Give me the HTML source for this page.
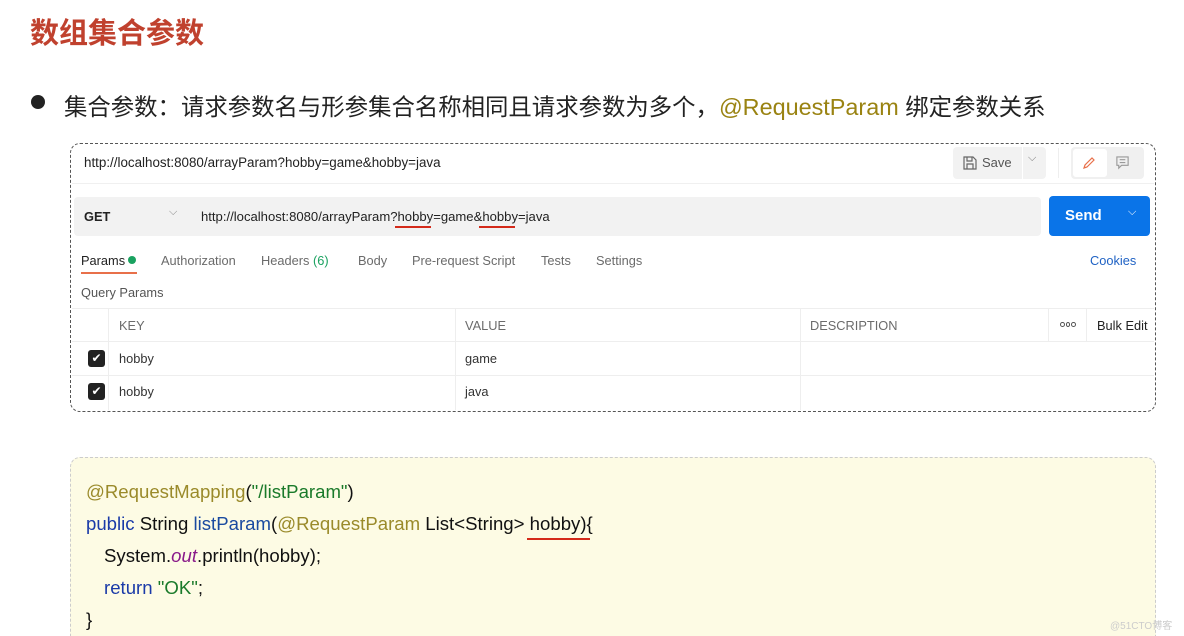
<!DOCTYPE html>
<html><head><meta charset="utf-8"><style>
*{margin:0;padding:0;box-sizing:border-box}
html,body{width:1184px;height:636px;overflow:hidden}
body{background:#fff;position:relative;font-family:"Liberation Sans","Noto Sans CJK SC",sans-serif;color:#222}
.a{position:absolute;white-space:nowrap}
.pm{font-size:12.8px;color:#333}
.g{color:#6b6b6b}
.code{font-size:18.6px;color:#111}
</style></head><body>
<div class="a" style="left:30px;top:10px;font-size:29px;font-weight:bold;color:#c0412e">数组集合参数</div>
<div class="a" style="left:31px;top:95px;width:14px;height:14px;border-radius:50%;background:#222"></div>
<div class="a" style="left:64px;top:88px;font-size:23.4px;color:#222">集合参数：请求参数名与形参集合名称相同且请求参数为多个，<span style="color:#9a8312">@RequestParam</span> 绑定参数关系</div>

<div class="a" style="left:70px;top:143px;width:1086px;height:269px;border:1px dashed #555;border-radius:10px"></div>
<div class="a pm" style="left:84px;top:155px;color:#222;font-size:13.4px">http://localhost:8080/arrayParam?hobby=game&amp;hobby=java</div>
<div class="a" style="left:953px;top:147px;width:93px;height:32px;background:#f2f2f2;border-radius:4px"></div>
<div class="a" style="left:1022px;top:147px;width:1px;height:32px;background:#fff"></div>
<svg class="a" style="left:962px;top:155px" width="16" height="16" viewBox="0 0 16 16" fill="none" stroke="#666" stroke-width="1.2"><path d="M2 2h9l3 3v9H2z M5 2v4h5V2 M5 14v-5h6v5"/></svg>
<div class="a pm" style="left:982px;top:155px;color:#555;font-size:13px">Save</div>
<div class="a" style="left:1028px;top:152px;color:#777;font-size:11px">⌵</div>
<div class="a" style="left:1058px;top:148px;width:1px;height:30px;background:#eee"></div>
<div class="a" style="left:1071px;top:147px;width:73px;height:32px;background:#f0f0f0;border-radius:4px"></div>
<div class="a" style="left:1073px;top:149px;width:34px;height:28px;background:#fff;border-radius:3px"></div>
<svg class="a" style="left:1081px;top:155px" width="16" height="16" viewBox="0 0 16 16" fill="none" stroke="#e8704a" stroke-width="1.2"><path d="M3 13l1-3 7-7 2 2-7 7z"/></svg>
<svg class="a" style="left:1115px;top:155px" width="15" height="15" viewBox="0 0 16 16" fill="none" stroke="#999" stroke-width="1.2"><path d="M2 2h12v9H7l-3 3v-3H2z M5 5h6 M5 8h6"/></svg>
<div class="a" style="left:72px;top:183px;width:1082px;height:1px;background:#f0f0f0"></div>
<div class="a" style="left:74px;top:197px;width:967px;height:39px;background:#f2f2f2;border-radius:4px"></div>
<div class="a pm" style="left:84px;top:209px;font-weight:bold;color:#222">GET</div>
<div class="a" style="left:169px;top:206px;color:#888;font-size:11px">⌵</div>
<div class="a pm" style="left:201px;top:209px;color:#222;font-size:13.1px">http://localhost:8080/arrayParam?hobby=game&amp;hobby=java</div>
<div class="a" style="left:395px;top:226px;width:36px;height:2px;background:#d42a1a"></div>
<div class="a" style="left:479px;top:226px;width:36px;height:2px;background:#d42a1a"></div>
<div class="a" style="left:1049px;top:196px;width:101px;height:40px;background:#0a74e8;border-radius:4px"></div>
<div class="a" style="left:1065px;top:207px;color:#fff;font-weight:bold;font-size:15px">Send</div>
<div class="a" style="left:1128px;top:206px;color:#fff;font-size:11px">⌵</div>
<div class="a pm" style="left:81px;top:253px;color:#222">Params</div>
<div class="a" style="left:128px;top:256px;width:8px;height:8px;border-radius:50%;background:#1aa260"></div>
<div class="a" style="left:81px;top:272px;width:56px;height:2px;background:#e8704a"></div>
<div class="a pm g" style="left:161px;top:253px">Authorization</div>
<div class="a pm g" style="left:261px;top:253px">Headers <span style="color:#1aa260">(6)</span></div>
<div class="a pm g" style="left:358px;top:253px">Body</div>
<div class="a pm g" style="left:412px;top:253px">Pre-request Script</div>
<div class="a pm g" style="left:541px;top:253px">Tests</div>
<div class="a pm g" style="left:596px;top:253px">Settings</div>
<div class="a pm" style="left:1090px;top:253px;color:#1f62c4">Cookies</div>
<div class="a pm" style="left:81px;top:285px;color:#555">Query Params</div>
<div class="a" style="left:72px;top:308px;width:1082px;height:1px;background:#eee"></div>
<div class="a" style="left:72px;top:341px;width:1082px;height:1px;background:#eee"></div>
<div class="a" style="left:72px;top:375px;width:1082px;height:1px;background:#eee"></div>
<div class="a" style="left:108px;top:308px;width:1px;height:102px;background:#eee"></div>
<div class="a" style="left:455px;top:308px;width:1px;height:102px;background:#eee"></div>
<div class="a" style="left:800px;top:308px;width:1px;height:102px;background:#eee"></div>
<div class="a" style="left:1048px;top:308px;width:1px;height:33px;background:#eee"></div>
<div class="a" style="left:1086px;top:308px;width:1px;height:33px;background:#eee"></div>
<div class="a pm g" style="left:119px;top:318px">KEY</div>
<div class="a pm g" style="left:465px;top:318px">VALUE</div>
<div class="a pm g" style="left:810px;top:318px">DESCRIPTION</div>
<div class="a" style="left:1060px;top:322px;width:16px;height:5px;display:flex;gap:1px"><i style="width:5px;height:5px;border:1px solid #555;border-radius:50%"></i><i style="width:5px;height:5px;border:1px solid #555;border-radius:50%"></i><i style="width:5px;height:5px;border:1px solid #555;border-radius:50%"></i></div>
<div class="a pm" style="left:1097px;top:318px;color:#222">Bulk Edit</div>
<div class="a" style="left:88px;top:350px;width:17px;height:17px;background:#222;border-radius:3px;color:#fff;font-size:12px;text-align:center;line-height:17px">✔</div>
<div class="a" style="left:88px;top:383px;width:17px;height:17px;background:#222;border-radius:3px;color:#fff;font-size:12px;text-align:center;line-height:17px">✔</div>
<div class="a pm" style="left:119px;top:351px">hobby</div>
<div class="a pm" style="left:465px;top:351px">game</div>
<div class="a pm" style="left:119px;top:384px">hobby</div>
<div class="a pm" style="left:465px;top:384px">java</div>

<div class="a" style="left:70px;top:457px;width:1086px;height:200px;background:#fdfbe4;border:1px dashed #ccc;border-radius:10px"></div>
<div class="a code" style="left:86px;top:481px"><span style="color:#9a8a2a">@RequestMapping</span>(<span style="color:#1a7a2a">"/listParam"</span>)</div>
<div class="a code" style="left:86px;top:513px"><span style="color:#1a3aa8">public</span> String <span style="color:#1a4aa0">listParam</span>(<span style="color:#9a8a2a">@RequestParam</span> List&lt;String&gt; hobby){</div>
<div class="a" style="left:527px;top:538px;width:63px;height:2px;background:#d42a1a"></div>
<div class="a code" style="left:104px;top:545px">System.<i style="color:#8a1a8a">out</i>.println(hobby);</div>
<div class="a code" style="left:104px;top:577px"><span style="color:#1a3aa8">return</span> <span style="color:#1a7a2a">"OK"</span>;</div>
<div class="a code" style="left:86px;top:609px">}</div>
<div class="a" style="left:1110px;top:617px;font-size:10px;color:#ccc">@51CTO博客</div>
</body></html>
